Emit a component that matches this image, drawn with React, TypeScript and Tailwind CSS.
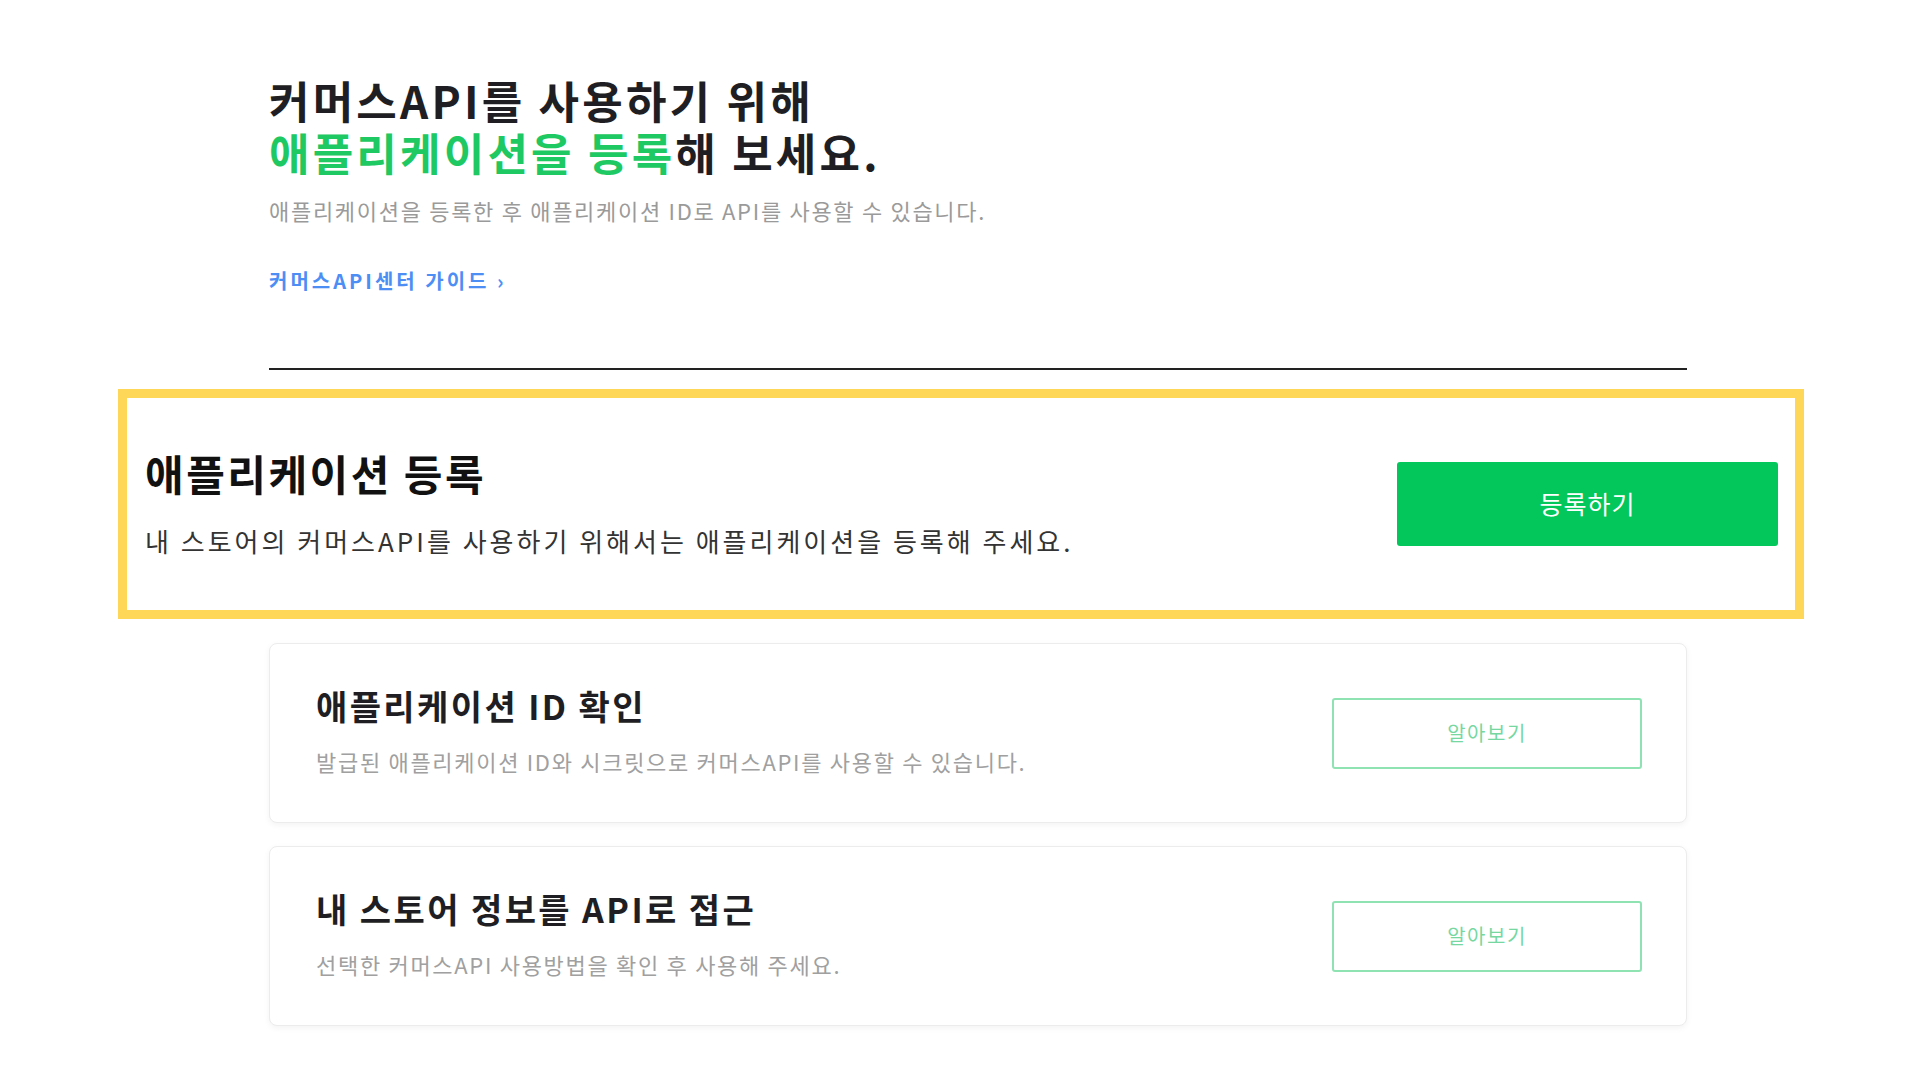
import React from "react";

const font = { fontFamily: '"Noto Sans CJK KR", "Noto Sans", sans-serif' };

type InfoCardProps = {
  title: string;
  desc: string;
};

const InfoCard: React.FC<InfoCardProps> = ({ title, desc }) => (
  <div className="ml-[269px] w-[1418px] h-[180px] flex items-center justify-between pl-[46px] pr-[44px] bg-white border border-[#ececec] rounded-lg shadow-[0_2px_6px_rgba(0,0,0,0.05)]">
    <div className="flex flex-col -mt-[4px]">
      <h3 className="text-[34px] leading-[40px] font-bold tracking-[2.4px] text-[#1e1e23]">{title}</h3>
      <p className="mt-[20px] text-[22px] leading-[30px] tracking-[1.7px] text-[#a0a0a0]">{desc}</p>
    </div>
    <button className="w-[310px] h-[71px] border-2 border-[#8fe3b3] rounded-[3px] text-[20px] tracking-[1.5px] text-[#76d8a0] bg-white">
      알아보기
    </button>
  </div>
);

const App: React.FC = () => {
  return (
    <div className="min-h-screen bg-white flex flex-col pb-[60px]" style={font}>
      {/* 상단 안내 */}
      <section className="ml-[269px] w-[1418px] pt-[74px] flex flex-col">
        <h1 className="text-[44px] leading-[52px] font-bold tracking-[3.2px] text-[#1e1e23]">
          커머스API를 사용하기 위해
          <br />
          <span className="text-[#1ec862]">애플리케이션을 등록</span>해 보세요.
        </h1>
        <p className="mt-[17px] text-[22px] leading-[30px] tracking-[1.7px] text-[#9a9a9a]">
          애플리케이션을 등록한 후 애플리케이션 ID로 API를 사용할 수 있습니다.
        </p>
        <a className="mt-[42px] text-[20px] leading-[28px] font-bold tracking-[3px] text-[#4d8ef5] self-start" href="#">
          커머스API센터 가이드 ›
        </a>
        <div className="mt-[73px] h-[2px] bg-[#222]" />
      </section>

      {/* 애플리케이션 등록 */}
      <section className="ml-[118px] w-[1686px] h-[230px] mt-[19px] border-[9px] border-[#ffd758] bg-white flex items-center justify-between pl-[18px] pr-[17px]">
        <div className="flex flex-col -mt-[2px]">
          <h2 className="text-[42px] leading-[50px] font-bold tracking-[2.5px] text-[#111]">애플리케이션 등록</h2>
          <p className="mt-[26px] text-[26px] leading-[34px] tracking-[3px] text-[#333]">
            내 스토어의 커머스API를 사용하기 위해서는 애플리케이션을 등록해 주세요.
          </p>
        </div>
        <button className="w-[381px] h-[84px] rounded-[3px] bg-[#03c75a] text-white text-[25px] tracking-[1px]">
          등록하기
        </button>
      </section>

      <div className="mt-[24px] flex flex-col gap-[23px]">
        <InfoCard title="애플리케이션 ID 확인" desc="발급된 애플리케이션 ID와 시크릿으로 커머스API를 사용할 수 있습니다." />
        <InfoCard title="내 스토어 정보를 API로 접근" desc="선택한 커머스API 사용방법을 확인 후 사용해 주세요." />
      </div>
    </div>
  );
};

export default App;
